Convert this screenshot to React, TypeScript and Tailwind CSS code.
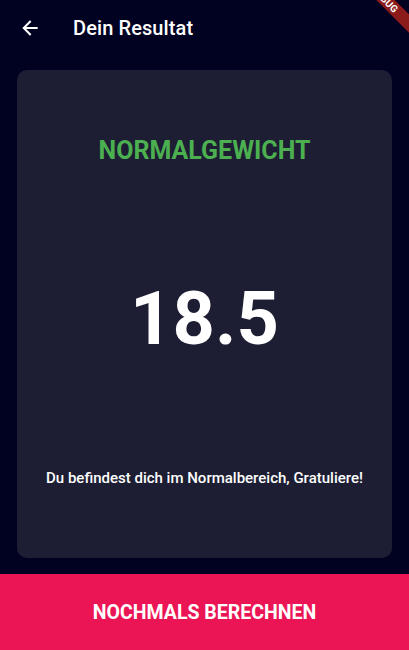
import React from 'react';

const App: React.FC = () => {
  return (
    <div className="relative w-[409px] h-[650px] overflow-hidden bg-[#010121] flex flex-col" style={{ fontFamily: 'Roboto, "Noto Sans", sans-serif' }}>
      {/* App bar */}
      <div className="h-[56px] flex items-center shrink-0">
        <button className="w-[56px] h-[56px] flex items-center justify-center pl-[4px]">
          <svg width="20" height="20" viewBox="0 0 24 24" fill="none" stroke="white" strokeWidth="2.4" strokeLinecap="square">
            <path d="M20 12H5" />
            <path d="M12 4.5L4.5 12L12 19.5" />
          </svg>
        </button>
        <h1 className="ml-[17px] text-white text-[20px] font-medium tracking-[0.1px]">Dein Resultat</h1>
      </div>

      {/* Result card */}
      <div className="flex-1 flex flex-col px-[17px] pt-[14px] pb-[16px]">
        <div className="flex-1 bg-[#1d1e33] rounded-[10px] flex flex-col items-center">
          <div className="mt-[66px] text-[#4caf50] text-[25px] font-bold leading-[30px]">NORMALGEWICHT</div>
          <div className="mt-[108px] text-white text-[74px] font-bold leading-[90px]">18.5</div>
          <div className="mt-[104px] text-white text-[15px] font-medium leading-[20px]">Du befindest dich im Normalbereich, Gratuliere!</div>
        </div>
      </div>

      {/* Bottom button */}
      <button className="h-[76px] shrink-0 bg-[#eb1555] flex items-center justify-center">
        <span className="text-white text-[19.5px] font-bold leading-[24px] mt-[2px]">NOCHMALS BERECHNEN</span>
      </button>

      {/* Debug banner */}
      <div className="absolute left-[340px] top-[-7px] w-[90px] h-[13px] bg-[#8b1a1a] rotate-45 flex items-center justify-center">
        <span className="text-white text-[10px] font-bold leading-none">DEBUG</span>
      </div>
    </div>
  );
};

export default App;
